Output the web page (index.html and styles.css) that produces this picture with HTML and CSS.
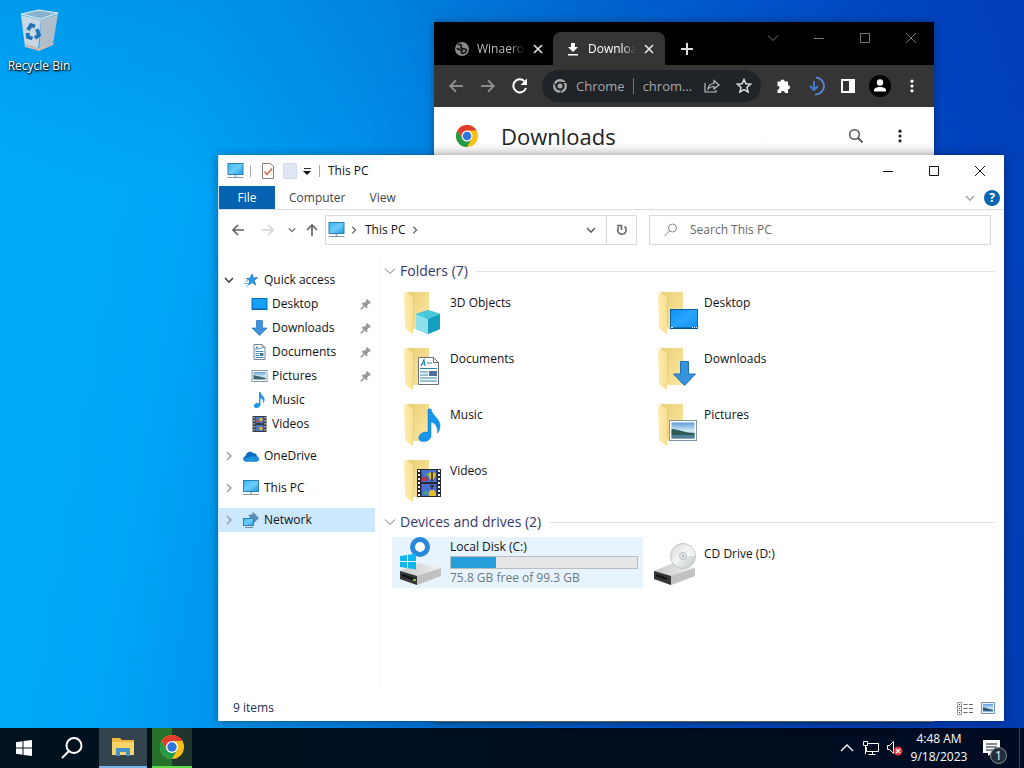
FILE: index.html
```html
<!DOCTYPE html>
<html lang="en">
<head>
<meta charset="utf-8">
<meta name="viewport" content="width=device-width, initial-scale=1">
<title>This PC</title>
<link rel="stylesheet" href="styles.css">
</head>
<body>
<svg class="sprite" aria-hidden="true">
  <defs>
    <linearGradient id="g-screen" x1="0" y1="0" x2="1" y2="1"><stop offset="0" stop-color="#35b5f5"/><stop offset=".5" stop-color="#6fcdfa"/><stop offset="1" stop-color="#1e97e4"/></linearGradient>
    <linearGradient id="g-flap" x1="0" y1="0" x2="1" y2="0"><stop offset="0" stop-color="#fdedb4"/><stop offset="1" stop-color="#f9df90"/></linearGradient>
    <linearGradient id="g-back" x1="0" y1="0" x2="1" y2="1"><stop offset="0" stop-color="#ecce74"/><stop offset="1" stop-color="#fce9a6"/></linearGradient>
    <linearGradient id="g-blue" x1="0" y1="0" x2="1" y2="1"><stop offset="0" stop-color="#0c8ff0"/><stop offset=".5" stop-color="#2aa6ff"/><stop offset="1" stop-color="#0c8ff0"/></linearGradient>
    <linearGradient id="g-photo" x1="0" y1="0" x2="0" y2="1"><stop offset="0" stop-color="#5c9bdc"/><stop offset=".5" stop-color="#cfe6f5"/><stop offset="1" stop-color="#86b4cf"/></linearGradient>
    <linearGradient id="g-drive" x1="0" y1="0" x2="1" y2="0"><stop offset="0" stop-color="#c9c9c9"/><stop offset="1" stop-color="#f0f0f0"/></linearGradient>
    <linearGradient id="g-disc" x1="0" y1="0" x2="1" y2="1"><stop offset="0" stop-color="#d2d4d5"/><stop offset=".45" stop-color="#f4f5f5"/><stop offset="1" stop-color="#bcc2c4"/></linearGradient>
  </defs>
  <symbol id="pc" viewBox="0 0 16 16"><rect x=".5" y=".5" width="15" height="11" fill="url(#g-screen)" stroke="#2b7fb5"/><path d="M7 12h2v2H7z" fill="#9fb6c4"/><path d="M0 14.5h16" stroke="#8a9aa5"/></symbol>
  <symbol id="desk" viewBox="0 0 16 16"><rect x=".5" y="2.500" width="15" height="11" fill="#13a0f5" stroke="#0b6fc0"/><path d="M1 13h14" stroke="#0a4f8a" stroke-dasharray="2 1"/></symbol>
  <symbol id="down" viewBox="0 0 16 16"><path d="M5 .5h6V8h4.500L8 15.500.5 8H5z" fill="#3d92dd" stroke="#2670b8" stroke-width=".7"/></symbol>
  <symbol id="doc" viewBox="0 0 16 16"><path d="M2.500.5h8l3 3v12h-11z" fill="#fff" stroke="#7a8791"/><path d="M10.500.5v3h3" fill="none" stroke="#7a8791"/><path d="M4 6l1.500-3.500L7 6M8 4.500h2M4 7.500h8M4 9.500h3.500M4 11.500h3.500M4 13.500h8" fill="none" stroke="#3f8fb8"/><path d="M8.500 9h3.500v3H8.500z" fill="#46799c"/></symbol>
  <symbol id="pic" viewBox="0 0 16 16"><rect x=".5" y="2.500" width="15" height="11" fill="#fff" stroke="#8797a3"/><path d="M2 4h12v8H2z" fill="url(#g-photo)"/><path d="M2 7l4 1 8 2v1H2z" fill="#3c6570"/></symbol>
  <symbol id="music" viewBox="0 0 16 16"><path d="M7.500 0h1.500c.3 3.500 4.500 4 4 8.500-.2 1.300-.7 2.200-1.500 3C12 8.500 11 7 9 6.300V13c-.3 2-2.200 3-4 3-2 0-3-1.200-2.500-2.800.5-1.700 3-2.700 5-2z" fill="#1c97ea"/></symbol>
  <symbol id="video" viewBox="0 0 16 16"><path d="M1 0h14v16H1z" fill="#333a44"/><path d="M2.500 1v15M13.500 1v15" stroke="#fff" stroke-dasharray="1.500 1.500"/><path d="M4 1h8v6H4zM4 9h8v6H4z" fill="#5276bd"/><path d="M4 5l3-1 2 2H4z" fill="#c7473c"/><path d="M8 2h3v3H8zM8 11h3v3H8z" fill="#dfb82e"/></symbol>
  <symbol id="star" viewBox="0 0 16 16"><path d="M9 2l1.300 4 4.200-.4-3.300 2.900 1.600 4.500-3.700-2.400L5.500 13l1.300-4.300L3.500 6.500l3.700-.3z" fill="#2a9be3" stroke="#1976b8" stroke-width=".8"/><path d="M2 9h3M1 11.500h4M3 14h2" stroke="#58b2ec"/></symbol>
  <symbol id="cloud" viewBox="0 0 16 16"><path d="M3 13.500C-.5 13-.7 9 2.500 8 3 4 8 2 10.500 5.300 13 5 14 7 14 8.500c2.500.5 2.500 4.800-.5 5z" fill="#0f6cbd"/><path d="M3 13.500c-1.500 0-2.700-1.200-2.700-2.600L9 8l5 .5c2.500.5 2.500 4.800-.5 5z" fill="#1c8fdc"/></symbol>
  <symbol id="net" viewBox="0 0 16 16"><path d="M6 3h4V.5L15.500 6 10 11.500z" fill="#5a91b5" stroke="#35698c" stroke-width=".6"/><rect x=".5" y="6.500" width="10" height="7" fill="url(#g-screen)" stroke="#2b7fb5"/><path d="M2 15.500h8" stroke="#6d8fa5"/></symbol>
  <symbol id="pin" viewBox="0 0 12 12"><path d="M7 .8L11.200 5l-1 .6-1 0L7.200 7.600l.2 2-1 .8L1.600 5.600l.8-1 2 .2 2-2V1.600z" fill="#9a9a9a"/><path d="M4 8L.8 11.200" stroke="#8a8a8a" stroke-width="1.300"/></symbol>
  <symbol id="v" viewBox="0 0 10 10"><path d="M1 3l4 4 4-4" fill="none" stroke="currentColor" stroke-width="1.600"/></symbol>
  <symbol id="r" viewBox="0 0 10 10"><path d="M3 1l4 4-4 4" fill="none" stroke="currentColor" stroke-width="1.600"/></symbol>
  <symbol id="thin-v" viewBox="0 0 12 12"><path d="M1 3.500l5 5 5-5" fill="none" stroke="currentColor"/></symbol>
  <symbol id="left" viewBox="0 0 14 14"><path d="M13 7H2M7 2L2 7l5 5" fill="none" stroke="currentColor" stroke-width="1.700"/></symbol>
  <symbol id="x" viewBox="0 0 12 12"><path d="M1 1l10 10M11 1L1 11" stroke="currentColor"/></symbol>
  <symbol id="xb" viewBox="0 0 10 10"><path d="M1 1l8 8M9 1L1 9" stroke="currentColor" stroke-width="1.600"/></symbol>
  <symbol id="max" viewBox="0 0 12 12"><path d="M1.500 1.500h9v9h-9z" fill="none" stroke="currentColor"/></symbol>
  <symbol id="min" viewBox="0 0 12 12"><path d="M1 6.500h10" stroke="currentColor"/></symbol>
  <symbol id="glass" viewBox="0 0 16 16"><circle cx="6.500" cy="6.500" r="4.800" fill="none" stroke="currentColor" stroke-width="1.500"/><path d="M10 10l4.500 4.500" stroke="currentColor" stroke-width="1.800"/></symbol>
  <symbol id="dots" viewBox="0 0 16 16"><g fill="currentColor"><circle cx="8" cy="2.500" r="1.800"/><circle cx="8" cy="8" r="1.800"/><circle cx="8" cy="13.500" r="1.800"/></g></symbol>
  <symbol id="chrome" viewBox="0 0 24 24"><circle cx="12" cy="12" r="12" fill="#fbc016"/><path d="M1.600 6A12 12 0 0 1 22.400 6H12L6.800 15z" fill="#e33b2e"/><path d="M1.600 6l5.200 9L12 18l5.200-3L12 24A12 12 0 0 1 1.600 6z" fill="#229a48"/><circle cx="12" cy="12" r="6" fill="#fff"/><circle cx="12" cy="12" r="4.700" fill="#2d74dd"/></symbol>
  <symbol id="folder" viewBox="0 0 48 48"><path d="M9 3h22v37H14z" fill="url(#g-back)"/><path d="M6 3l9 5v37L7 39.500z" fill="url(#g-flap)"/><path d="M15.500 8v28l3 3" fill="none" stroke="#e6c873" stroke-width=".7"/></symbol>
  <symbol id="drive" viewBox="0 0 48 48"><path d="M2 34l19-8 22 5v8l-24 9-17-6z" fill="url(#g-drive)"/><path d="M2 34l17 5 24-8v8L19 48 2 42z" fill="#bfc1c2"/><path d="M2 34l17 5v9L2 42z" fill="#343638"/><path d="M4 38l11 4" stroke="#111" stroke-width="2"/></symbol>
</svg>

<main class="desktop">
  <a class="shortcut" href="#bin">
    <svg width="44" height="44" viewBox="0 0 44 44" aria-hidden="true"><path d="M4 6l20 5-3 30-13-3z" fill="#c9d7e0"/><path d="M24 11l17-6-5 30-14 6z" fill="#aebfcb"/><path d="M4 5l18-4 19 3-17 6z" fill="#86b4cf" stroke="#e3edf3" stroke-width="1.200"/><path d="M8 35l14 4 15-5-1 2-14 6-13-4z" fill="#cbb9b4"/><g fill="none" stroke="#1d74bd" stroke-width="3.800"><path d="M11 21l3-5 4 1.500M20 20l2 6-4 3M15.500 29.500L11 28l-.5-4"/></g></svg>
    <span>Recycle Bin</span>
  </a>

  <section class="window browser" aria-label="Browser">
    <header class="strip">
      <div class="tab"><svg width="14" height="14" viewBox="0 0 14 14" aria-hidden="true"><circle cx="7" cy="7" r="7" fill="#8a8a8a"/><path d="M3 3c3-2 4 1 3 2s2 2 4 2 2 3-1 4-3-1-2-2-4-1-5-3" fill="none" stroke="#161616" stroke-width="1.700"/></svg><span class="tab-name">Winaero</span><button aria-label="Close tab"><svg width="10" height="10"><use href="#xb"/></svg></button></div>
      <div class="tab active"><svg width="14" height="14" viewBox="0 0 14 14" aria-hidden="true"><path d="M5 1h4v4h3L7 10 2 5h3zM2 12h10v1.600H2z" fill="#fff"/></svg><span class="tab-name">Downloads</span><button aria-label="Close tab"><svg width="10" height="10"><use href="#xb"/></svg></button></div>
      <button class="new" aria-label="New tab"><svg width="12" height="12" viewBox="0 0 12 12"><path d="M6 0v12M0 6h12" stroke="#ddd" stroke-width="2"/></svg></button>
      <div class="caption dim">
        <button aria-label="Search tabs"><svg width="12" height="12"><use href="#thin-v"/></svg></button>
        <button aria-label="Minimize"><svg width="12" height="12"><use href="#min"/></svg></button>
        <button aria-label="Maximize"><svg width="12" height="12"><use href="#max"/></svg></button>
        <button aria-label="Close"><svg width="12" height="12"><use href="#x"/></svg></button>
      </div>
    </header>
    <div class="tools">
      <button class="faded" aria-label="Back"><svg width="16" height="16"><use href="#left"/></svg></button>
      <button class="faded flip" aria-label="Forward"><svg width="16" height="16"><use href="#left"/></svg></button>
      <button aria-label="Reload"><svg width="16" height="16" viewBox="0 0 16 16"><path d="M14 10A6.500 6.500 0 1 1 12.500 3.300" fill="none" stroke="#fff" stroke-width="2"/><path d="M15 .5V7H8.500z" fill="#fff"/></svg></button>
      <div class="omni">
        <svg width="14" height="14" viewBox="0 0 14 14" aria-hidden="true"><circle cx="7" cy="7" r="5.800" fill="none" stroke="#a9a9a9" stroke-width="2.400"/><circle cx="7" cy="7" r="2.500" fill="#a9a9a9"/><path d="M7 3.500h6.500M10 9l-3.200 5M4 9L.8 3.600" stroke="#24262a"/></svg>
        <span class="site">Chrome</span><span class="url">chrome://downloads</span>
        <button aria-label="Share"><svg width="16" height="16" viewBox="0 0 16 16"><path d="M1 5v9h11v-2M4 11c.5-4 2.500-5.500 6-5.500V2.500L15 7l-5 4V8.500C7.500 8.500 5.500 9 4 11z" fill="none" stroke="#bdbdbd" stroke-width="1.200"/></svg></button>
        <button aria-label="Bookmark"><svg width="16" height="16" viewBox="0 0 16 16"><path d="M8 1.500l1.900 4.300 4.700.4-3.600 3.100 1.100 4.600L8 11.500l-4.100 2.400L5 9.300 1.400 6.200l4.700-.4z" fill="none" stroke="#ddd" stroke-width="1.500"/></svg></button>
      </div>
      <button aria-label="Extensions"><svg width="16" height="16" viewBox="0 0 16 16"><path d="M4.500 3.500a2.100 2.100 0 0 1 4.200 0H12v3.700a2.100 2.100 0 0 1 0 4.200V15H8.900a2 2 0 0 0-4 0H1.500v-3.300a2 2 0 0 0 0-4V3.500z" fill="#fff"/></svg></button>
      <button aria-label="Downloads"><svg width="20" height="20" viewBox="0 0 20 20"><path d="M10 1.500a8.500 8.500 0 1 1-1 17" fill="none" stroke="#5b7fd6" stroke-width="2"/><path d="M8 5v9M4 10l4 4 4-4" fill="none" stroke="#3f78d2" stroke-width="2"/></svg></button>
      <button aria-label="Side panel"><svg width="14" height="14" viewBox="0 0 14 14"><path d="M1 1h12v12H1z" fill="none" stroke="#fff" stroke-width="2"/><path d="M8 0h6v14H8z" fill="#fff"/></svg></button>
      <button aria-label="Profile"><svg width="22" height="22" viewBox="0 0 22 22"><circle cx="11" cy="11" r="11" fill="#000"/><circle cx="11" cy="7.500" r="3.200" fill="#fff"/><path d="M5 16.500v-1.500c0-4 12-4 12 0v1.500z" fill="#fff"/></svg></button>
      <button aria-label="Menu"><svg width="14" height="14"><use href="#dots"/></svg></button>
    </div>
    <div class="page">
      <svg width="22" height="22" aria-hidden="true"><use href="#chrome"/></svg>
      <h1>Downloads</h1>
      <button aria-label="Search downloads"><svg width="16" height="16"><use href="#glass"/></svg></button>
      <button aria-label="More actions"><svg width="14" height="14"><use href="#dots"/></svg></button>
    </div>
  </section>

  <section class="window explorer" aria-label="This PC">
    <header class="title">
      <svg width="17" height="16" aria-hidden="true"><use href="#pc"/></svg><i class="bar"></i>
      <button aria-label="Properties"><svg width="14" height="16" viewBox="0 0 14 16"><path d="M1.500.5h8l3 3v12h-11z" fill="#fdfaf8" stroke="#8c807b"/><path d="M3.500 8.500l2.500 3 5-6" fill="none" stroke="#cf7355" stroke-width="1.700"/></svg></button>
      <button aria-label="New folder"><svg width="14" height="16" viewBox="0 0 14 16"><path d="M.5.5h13v15H.5z" fill="#dfe6f4" stroke="#d0daea"/></svg></button>
      <button class="customize" aria-label="Customize"><svg width="8" height="8" viewBox="0 0 8 8"><path d="M1 1.500h7" stroke="#333"/><path d="M0 4h8L4 8z" fill="#111"/></svg></button><i class="bar"></i>
      <span class="name">This PC</span>
      <div class="caption">
        <button aria-label="Minimize"><svg width="12" height="12"><use href="#min"/></svg></button>
        <button aria-label="Maximize"><svg width="12" height="12"><use href="#max"/></svg></button>
        <button aria-label="Close"><svg width="12" height="12"><use href="#x"/></svg></button>
      </div>
    </header>
    <nav class="ribbon" aria-label="Ribbon">
      <button class="file">File</button><button>Computer</button><button>View</button>
      <button class="expand" aria-label="Expand ribbon"><svg width="10" height="10"><use href="#v"/></svg></button>
      <button class="help" aria-label="Help">?</button>
    </nav>
    <div class="address">
      <button aria-label="Back"><svg width="14" height="14"><use href="#left"/></svg></button>
      <button class="off flip" aria-label="Forward"><svg width="14" height="14"><use href="#left"/></svg></button>
      <button class="recent" aria-label="Recent locations"><svg width="8" height="8"><use href="#v"/></svg></button>
      <button class="up" aria-label="Up"><svg width="14" height="14"><use href="#left"/></svg></button>
      <div class="path">
        <svg width="17" height="16" aria-hidden="true"><use href="#pc"/></svg>
        <svg class="crumb" width="8" height="8" aria-hidden="true"><use href="#r"/></svg>
        <button>This PC</button>
        <svg class="crumb" width="8" height="8" aria-hidden="true"><use href="#r"/></svg>
        <button class="history" aria-label="Previous locations"><svg width="10" height="10"><use href="#v"/></svg></button>
        <button class="refresh" aria-label="Refresh"><svg width="12" height="12" viewBox="0 0 12 12"><path d="M3 2.800A4.300 4.300 0 1 0 8.500 2.500" fill="none" stroke="#666" stroke-width="1.600"/><path d="M1 1.500h4.500V6" fill="none" stroke="#666" stroke-width="1.600"/></svg></button>
      </div>
      <label class="search"><svg width="14" height="14" viewBox="0 0 14 14" aria-hidden="true"><circle cx="8.500" cy="5" r="4" fill="none" stroke="#888"/><path d="M5.500 8L.5 13" stroke="#888"/></svg><input type="search" placeholder="Search This PC" aria-label="Search This PC"></label>
    </div>
    <div class="body">
      <nav class="tree" aria-label="Navigation pane">
        <a class="open" href="#quick"><svg class="tog" width="10" height="10"><use href="#v"/></svg><svg width="16" height="16"><use href="#star"/></svg>Quick access</a>
        <a class="sub" href="#desktop"><svg width="17" height="16"><use href="#desk"/></svg>Desktop<svg class="pin" width="12" height="12"><use href="#pin"/></svg></a>
        <a class="sub" href="#downloads"><svg width="17" height="16"><use href="#down"/></svg>Downloads<svg class="pin" width="12" height="12"><use href="#pin"/></svg></a>
        <a class="sub" href="#documents"><svg width="17" height="16"><use href="#doc"/></svg>Documents<svg class="pin" width="12" height="12"><use href="#pin"/></svg></a>
        <a class="sub" href="#pictures"><svg width="17" height="16"><use href="#pic"/></svg>Pictures<svg class="pin" width="12" height="12"><use href="#pin"/></svg></a>
        <a class="sub" href="#music"><svg width="17" height="16"><use href="#music"/></svg>Music</a>
        <a class="sub" href="#videos"><svg width="17" height="16"><use href="#video"/></svg>Videos</a>
        <a class="root" href="#onedrive"><svg class="tog" width="10" height="10"><use href="#r"/></svg><svg width="16" height="16"><use href="#cloud"/></svg>OneDrive</a>
        <a class="root" href="#pc-root"><svg class="tog" width="10" height="10"><use href="#r"/></svg><svg width="16" height="16"><use href="#pc"/></svg>This PC</a>
        <a class="root current" href="#network"><svg class="tog" width="10" height="10"><use href="#r"/></svg><svg width="16" height="16"><use href="#net"/></svg>Network</a>
      </nav>
      <div class="files">
        <h2><svg width="12" height="12" aria-hidden="true"><use href="#thin-v"/></svg>Folders (7)</h2>
        <div class="grid">
          <a class="item" href="#3d"><svg width="48" height="48" viewBox="0 0 48 48"><use href="#folder"/><path d="M30 21l12 4v15l-12 5-12-5V25z" fill="#25b3cf"/><path d="M18 25l12 5v15l-12-5z" fill="#8ce0ea"/><path d="M30 30l12-5v15l-12 5z" fill="#149fbe"/><path d="M30 21l12 4-12 5-12-5z" fill="#4cc8dc"/></svg><span>3D Objects</span></a>
          <a class="item" href="#desktop-folder"><svg width="48" height="48" viewBox="0 0 48 48"><use href="#folder"/><rect x="18.500" y="20.500" width="27" height="19" fill="url(#g-blue)" stroke="#0b62a8"/><path d="M19 39h27" stroke="#073f70"/><path d="M19 38.500h2M40 38.500h1M42 38.500h1M44 38.500h1" stroke="#fff"/></svg><span>Desktop</span></a>
          <a class="item" href="#documents-folder"><svg width="48" height="48" viewBox="0 0 48 48"><use href="#folder"/><path d="M20.500 12.500h15l5 5v22h-20z" fill="#fff" stroke="#6d6f7c"/><path d="M35.500 12.500v5h5" fill="none" stroke="#6d6f7c"/><path d="M23 21l3-6 1 6M24 19h3M29 18h5M22 23.500h17M22 27h8M22 30h8M22 33h17M22 36h17" fill="none" stroke="#2c84aa" stroke-width="1.200"/><path d="M31 26h8v5h-8z" fill="#4c6fa0"/></svg><span>Documents</span></a>
          <a class="item" href="#downloads-folder"><svg width="48" height="48" viewBox="0 0 48 48"><use href="#folder"/><path d="M28.500 16.500h8V29h7L32.500 40.500 21.500 29h7z" fill="#3592dd" stroke="#2270b4"/></svg><span>Downloads</span></a>
          <a class="item" href="#music-folder"><svg width="48" height="48" viewBox="0 0 48 48"><use href="#folder"/><path d="M30 8h3c1 7 9 9 9 17 0 3-1 5-2.500 7 .5-6-2-10-6.500-11v14c0 3.500-4 5.500-7.500 5.500S20 38.500 21 35.500s5-5.200 9-4.200z" fill="#1695ec" stroke="#0b77c6" stroke-width=".5"/></svg><span>Music</span></a>
          <a class="item" href="#pictures-folder"><svg width="48" height="48" viewBox="0 0 48 48"><use href="#folder"/><rect x="17.500" y="19.500" width="27" height="20" fill="#fff" stroke="#8294a8"/><path d="M19.500 21.500h23v16h-23z" fill="url(#g-photo)"/><path d="M19.500 28c7 0 13 4 23 4v2h-23z" fill="#2d5b53"/><path d="M19.500 34h23v3.500h-23z" fill="#527f96"/></svg><span>Pictures</span></a>
          <a class="item" href="#videos-folder"><svg width="48" height="48" viewBox="0 0 48 48"><use href="#folder"/><path d="M19 12h24v28H19z" fill="#252936"/><path d="M21 13v27M41 13v27" stroke="#fff" stroke-width="2" stroke-dasharray="2 2"/><path d="M23.500 13h15v12h-15zM23.500 27h15v12h-15z" fill="#4a6fd4"/><path d="M24 20h6v4h-6z" fill="#b7374a"/><path d="M25 34h5v4h-5zM27 16h4v3h-4z" fill="#3f9d8b"/><path d="M34 15c5 0 4 5 1 8h-2c-3-3-4-8 1-8zM34 33c4 0 4 3 4 6h-7c-1-3 0-6 3-6z" fill="#e5bd25"/><path d="M34 15v9M32 29h4M33 31h2" stroke="#2a2415" stroke-width="1.500"/></svg><span>Videos</span></a>
        </div>
        <h2><svg width="12" height="12" aria-hidden="true"><use href="#thin-v"/></svg>Devices and drives (2)</h2>
        <div class="grid">
          <a class="item drive hover" href="#c"><svg width="48" height="48" viewBox="0 0 48 48"><use href="#drive"/><circle cx="22" cy="10" r="7.500" fill="#fff" stroke="#2988da" stroke-width="5"/><path d="M2 19l7-1v6H2zM10 17.800l8-1.300V24h-8zM2 25h7v6l-7-1zM10 25h8v7.500l-8-1.300z" fill="#12b6ee"/><path d="M15 43h3" stroke="#7fbd31" stroke-width="2"/></svg>
            <span class="detail"><span>Local Disk (C:)</span><span class="meter"><span class="used" style="width:24%"></span></span><span class="free">75.8 GB free of 99.3 GB</span></span></a>
          <a class="item drive" href="#d"><svg width="48" height="48" viewBox="0 0 48 48"><use href="#drive"/><circle cx="31" cy="19" r="12.500" fill="url(#g-disc)" stroke="#bfc5c7"/><path d="M31 19L41 11l2.500 8z" fill="#fff" opacity=".6"/><circle cx="31" cy="19" r="3.500" fill="#e6e9ea" stroke="#b6bec1"/><circle cx="31" cy="19" r="1" fill="#9aa3a6"/></svg><span>CD Drive (D:)</span></a>
        </div>
      </div>
    </div>
    <footer class="status"><span>9 items</span>
      <button aria-label="Details view"><svg width="16" height="13" viewBox="0 0 16 13"><path d="M.5.5h4v12h-4zM.5 4.500h4M.5 8.500h4" fill="none" stroke="#999"/><path d="M2 2.500h1M2 6.500h1M2 10.500h1" stroke="#333"/><path d="M6.500 2.500h4M12 2.500h4M6.500 6.500h4M12 6.500h4M6.500 10.500h4M12 10.500h4" stroke="#666"/></svg></button>
      <button aria-label="Large icons view"><svg width="14" height="12" viewBox="0 0 14 12"><path d="M.5.5h13v11H.5z" fill="#e8f4fb" stroke="#7a93a6"/><path d="M2 2h10v8H2z" fill="url(#g-photo)"/><path d="M2 5l10 3v1H2z" fill="#2f5f80"/></svg></button>
    </footer>
  </section>
</main>

<footer class="taskbar">
  <button aria-label="Start"><svg width="16" height="16" viewBox="0 0 16 16"><path d="M0 2.200L6.500 1.200v6.300H0zM7.500 1L16 0v7.500H7.500zM0 8.500h6.500v6.300L0 13.800zM7.500 8.500H16V16l-8.500-1z" fill="#fff"/></svg></button>
  <button aria-label="Search"><svg width="22" height="22" viewBox="0 0 22 22"><circle cx="13" cy="8.500" r="7.500" fill="none" stroke="#fff" stroke-width="2"/><path d="M8 14l-7 7" stroke="#fff" stroke-width="2.200"/></svg></button>
  <button class="task files-task" aria-label="File Explorer"><svg width="22" height="20" viewBox="0 0 22 20"><path d="M0 1h8l2 2h12v15H0z" fill="#efb53c"/><path d="M0 5h22v13H0z" fill="#fbd567"/><path d="M4 11h14v8h-4v-4H8v4H4z" fill="#4590cd"/></svg></button>
  <button class="task chrome-task" aria-label="Chrome"><svg width="24" height="24"><use href="#chrome"/></svg></button>
  <div class="tray">
    <button aria-label="Show hidden icons"><svg width="14" height="14" viewBox="0 0 14 14"><path d="M1 10l6-6 6 6" fill="none" stroke="#fff" stroke-width="1.300"/></svg></button>
    <button aria-label="Network"><svg width="16" height="14" viewBox="0 0 16 14"><path d="M4 2.500h11.500v8H3.500V6M9.500 11v2.500M5.500 13.500h7M2.500 5v8M.5.5h4v4h-4z" fill="none" stroke="#fff"/></svg></button>
    <button aria-label="Volume"><svg width="18" height="16" viewBox="0 0 18 16"><path d="M1.500 5.500h2l4-4v12l-4-4h-2z" fill="none" stroke="#fff"/><circle cx="12" cy="11" r="4.500" fill="#d9363b"/><path d="M10 9l4 4M14 9l-4 4" stroke="#fff" stroke-width="1.200"/></svg></button>
    <button class="clock"><span>4:48 AM</span><span>9/18/2023</span></button>
    <button class="notes" aria-label="1 notification"><svg width="18" height="16" viewBox="0 0 18 16"><path d="M0 0h17v13H9l-4 3v-3H0z" fill="#fff"/><path d="M3 4h11M3 7h11M3 10h7" stroke="#061426"/></svg><span class="badge">1</span></button>
  </div>
</footer>
</body>
</html>
```

FILE: styles.css
```css
* { box-sizing: border-box; }
body { margin: 0; height: 100vh; min-height: 600px; display: flex; flex-direction: column; overflow: hidden; font: 12px/16px "Open Sans", "Noto Sans", sans-serif; color: #111; }
button { border: 0; padding: 0; margin: 0; background: none; font: inherit; color: inherit; display: flex; align-items: center; justify-content: center; }
a { color: inherit; text-decoration: none; }
svg { display: block; flex: none; }
.sprite { position: absolute; width: 0; height: 0; }
.flip { transform: scaleX(-1); }

.desktop { position: relative; flex: 1; background: linear-gradient(to bottom, rgba(0, 40, 150, .14), rgba(0, 150, 255, 0) 26%), linear-gradient(100deg, #00adfb 0%, #00a6f7 18%, #0090ea 34%, #0078dc 46%, #0058cf 66%, #0044c0 84%, #003cb0 100%); }
.shortcut { display: inline-flex; flex-direction: column; align-items: center; gap: 5px; width: 78px; padding-top: 9px; color: #fff; text-shadow: 1px 1px 2px #000, 0 1px 2px #000; }
.window { position: absolute; display: flex; flex-direction: column; background: #fff; }

.browser { left: 434px; right: 90px; top: 22px; bottom: 6px; border-bottom: 1px solid #777; box-shadow: 0 0 8px rgba(0, 0, 0, .35); }
.strip { display: flex; height: 43px; padding: 10px 0 0 13px; background: #000; color: #bbb; }
.tab { display: flex; align-items: center; gap: 8px; width: 106px; padding: 0 10px 0 8px; }
.tab.active { width: 112px; padding: 0 11px 0 13px; border-radius: 8px 8px 0 0; background: #353535; color: #fff; }
.tab-name { flex: 1; min-width: 0; overflow: hidden; white-space: nowrap; mask-image: linear-gradient(to right, #000 70%, transparent); }
.tab button { color: #e6e6e6; }
.new { width: 44px; }
.caption { display: flex; margin-left: auto; align-self: flex-start; }
.caption button { width: 46px; height: 31px; }
.caption.dim { margin-top: -10px; color: #777; }
.tools { display: flex; align-items: center; height: 42px; padding: 0 6px; background: #353535; color: #fff; }
.tools > button { width: 32px; height: 32px; }
.faded { color: #8b8b8b; }
.omni { display: flex; align-items: center; flex: 1; min-width: 0; height: 32px; margin: 0 7px 0 6px; padding: 0 1px 0 11px; border-radius: 16px; background: #202327; color: #a5a8ab; font-size: 13px; }
.site { padding: 0 8px 0 9px; border-right: 1px solid #74777a; }
.url { flex: 1; min-width: 0; padding-left: 9px; overflow: hidden; text-overflow: ellipsis; white-space: nowrap; }
.omni button { width: 32px; height: 32px; }
.page { display: flex; align-items: center; height: 58px; padding: 0 12px 0 22px; background: linear-gradient(to bottom, #fff 60%, #e6e6e6 86%); color: #555; }
.page h1 { flex: 1; margin: 0 0 0 23px; font: 500 22px/30px "Open Sans", sans-serif; color: #222; }
.page button { width: 44px; height: 40px; }
.page button:last-child { color: #222; }

.explorer { left: 218px; right: 20px; top: 155px; bottom: 7px; border-left: 1px solid #d5e3ee; box-shadow: 0 1px 9px rgba(0, 0, 0, .4); }
.title { display: flex; align-items: center; height: 31px; padding: 0 1px 0 8px; }
.bar { width: 1px; height: 12px; margin: 0 6px; background: #aaa; }
.title > button { margin: 0 4px; }
.title > .customize { margin: 0 2px; }
.name { margin-left: 2px; }
.ribbon { display: flex; height: 24px; border-bottom: 1px solid #dcdcdc; color: #444; }
.ribbon button { padding: 0 12px; }
.ribbon .file { width: 56px; margin-right: 2px; background: #0563b1; color: #fff; }
.ribbon .expand { margin-left: auto; padding: 0 6px; color: #aaa; }
.ribbon .help { align-self: center; width: 16px; height: 16px; margin: 0 4px 0 3px; padding: 0; border-radius: 50%; background: #0867b2; color: #fff; font-weight: 700; }
.address { display: flex; align-items: center; height: 40px; padding: 0 13px 0 12px; color: #666; }
.address > button { width: 14px; margin-right: 16px; }
.address .off { margin-right: 13px; color: #d4d4d4; }
.address .recent { width: 8px; margin-right: 9px; }
.address .up { margin-right: 6px; transform: rotate(90deg); }
.path { display: flex; align-items: center; flex: 308; height: 30px; padding-left: 2px; border: 1px solid #d9d9d9; color: #111; }
.path .crumb { margin: 0 7px 0 5px; color: #666; }
.path .history { width: 30px; margin-left: auto; color: #666; }
.path .refresh { width: 30px; height: 28px; border-left: 1px solid #d9d9d9; }
.search { display: flex; align-items: center; flex: 326; gap: 12px; height: 30px; margin-left: 12px; padding-left: 14px; border: 1px solid #d9d9d9; }
.search input { flex: 1; min-width: 0; border: 0; padding: 0; outline: 0; background: none; font: inherit; }
.search input::placeholder { color: #666; opacity: 1; }

.body { display: flex; flex: 1; min-height: 0; }
.tree { display: flex; flex-direction: column; width: 161px; padding: 18px 4px 0 0; border-right: 1px solid #fafafa; }
.tree a { display: flex; align-items: center; gap: 5px; height: 24px; padding-left: 5px; }
.tree .tog { margin-right: 4px; color: #a0a0a0; }
.tree .open .tog { color: #444; }
.tree .sub { gap: 4px; padding: 0 3px 0 32px; }
.tree .pin { margin-left: auto; }
.tree .root { margin-top: 8px; }
.tree .current { background: #cce8ff; }
.files { flex: 1; padding: 11px 9px 0 4px; }
.files h2 { display: flex; align-items: center; gap: 4px; height: 20px; margin: 0 0 5px; font: 400 14px/20px "Open Sans", sans-serif; color: #33386e; }
.files h2 svg { color: #777; }
.files h2::after { content: ""; flex: 1; height: 1px; margin-left: 4px; background: #e2e2e2; }
.grid { display: grid; grid-template-columns: repeat(auto-fill, 251px); gap: 5px 3px; margin: 0 0 7px 8px; }
.item { display: flex; gap: 4px; min-height: 51px; padding: 3px 5px 0 6px; }
.item > span { padding-top: 6px; }
.item.drive { padding-top: 0; }
.item.drive > span { padding-top: 9px; }
.item.hover { background: #e8f4fd; }
.item.drive > .detail { display: flex; flex: 1; flex-direction: column; gap: 1px; padding-top: 2px; }
.meter { height: 13px; border: 1px solid #bcbcbc; background: #e6e6e6; }
.used { display: block; height: 100%; background: #26a0da; }
.free { color: #6d7882; }
.status { display: flex; align-items: center; gap: 8px; height: 26px; padding: 0 9px 0 14px; color: #26314f; }
.status span { flex: 1; }

.taskbar { display: flex; height: 40px; background: linear-gradient(to right, #00131f, #000e20 60%, #000b22); color: #fff; }
.taskbar > button { width: 48px; }
.taskbar > button.task { margin-left: 3px; border-bottom: 2px solid #76b5ee; background: #34444f; }
.taskbar > button.chrome-task { width: 40px; margin-left: 5px; border-color: #5bdc49; background: linear-gradient(to right, #26722a 50%, #21352f 50%); }
.tray { display: flex; align-items: center; margin-left: auto; padding-right: 4px; }
.tray > button { width: 24px; height: 40px; }
.tray > button.clock { flex-direction: column; width: 64px; line-height: 18px; }
.tray > button.notes { position: relative; width: 49px; padding-right: 7px; border-right: 1px solid #36445a; }
.badge { position: absolute; right: 12px; bottom: 4px; width: 17px; height: 17px; border: 1px solid #87909b; border-radius: 50%; background: #252f3b; text-align: center; line-height: 15px; }
```
